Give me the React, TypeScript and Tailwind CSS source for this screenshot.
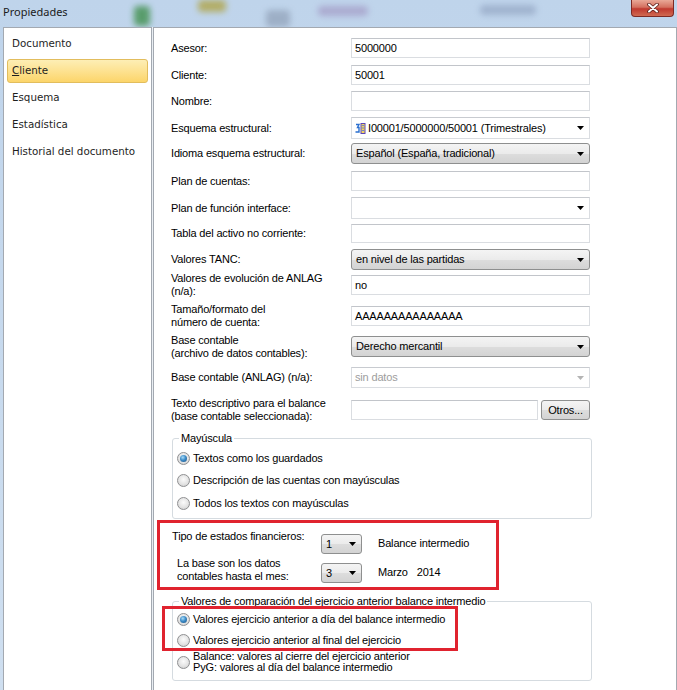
import React from "react";

function Arrow({ light = false }: { light?: boolean }) {
  return (
    <svg width="7" height="4" viewBox="0 0 7 4" className="shrink-0">
      <path d="M0 0h7L3.5 4z" fill={light ? "#b4b4b4" : "#000"} />
    </svg>
  );
}

function TextBox({ value = "", w = "w-[239px]", h = "h-[20px]" }: { value?: string; w?: string; h?: string }) {
  return (
    <div className={`${w} ${h} flex items-center border border-[#dadde1] border-t-[#c2c5ca] bg-white pl-[3px] text-black`}>
      {value}
    </div>
  );
}

function WhiteCombo({ children, h = "h-[22px]", disabled = false }: { children?: React.ReactNode; h?: string; disabled?: boolean }) {
  return (
    <div
      className={`w-[239px] ${h} flex items-center justify-between border border-[#dadde1] border-t-[#c8cbd0] bg-white pl-[3px] pr-[5px] ${
        disabled ? "text-[#9d9d9d]" : "text-black"
      }`}
    >
      <div className="flex items-center gap-[2px]">{children}</div>
      <Arrow light={disabled} />
    </div>
  );
}

function GrayCombo({ value, w = "w-[239px]", h = "h-[21px]" }: { value: string; w?: string; h?: string }) {
  return (
    <div
      className={`${w} ${h} flex items-center justify-between rounded-[3px] border border-[#8e8f8f] bg-[linear-gradient(#f4f4f4,#ebebeb_50%,#dddddd_51%,#d3d3d3)] pl-[4px] pr-[5px] text-black`}
    >
      <span>{value}</span>
      <Arrow />
    </div>
  );
}

function Row({ label, mt, h, children }: { label: React.ReactNode; mt: string; h: string; children: React.ReactNode }) {
  return (
    <div className={`flex items-center ${mt} ${h}`}>
      <div className="w-[180px] leading-[13px] text-black">{label}</div>
      {children}
    </div>
  );
}

function Radio({ checked = false }: { checked?: boolean }) {
  return (
    <span className="flex h-[13px] w-[13px] shrink-0 items-center justify-center rounded-full border border-[#8f9092] bg-[radial-gradient(circle_at_50%_40%,#fbfbfb,#e4e4e4_55%,#c9c9c9)]">
      {checked && (
        <span className="h-[7px] w-[7px] rounded-full bg-[radial-gradient(circle_at_40%_35%,#a9dcf8,#3d8cc8_45%,#1a4f80)]" />
      )}
    </span>
  );
}

function SchemeIcon() {
  return (
    <svg width="11" height="13" viewBox="0 0 11 13" className="shrink-0">
      <path d="M1 2.5h3l-1.5 3h1.5v4.5h-3.5" fill="none" stroke="#2a6fd0" strokeWidth="1.4" />
      <rect x="6" y="1.5" width="4" height="10" fill="#f3d35c" stroke="#5b46b8" strokeWidth="1" />
      <path d="M7 3.5h2M7 6h2M7 8.5h2" stroke="#4c7be0" strokeWidth="0.8" />
    </svg>
  );
}

export default function App() {
  const sideItems = ["Documento", "Cliente", "Esquema", "Estadística", "Historial del documento"];

  return (
    <div className="relative flex h-[690px] w-[677px] flex-col overflow-hidden bg-[linear-gradient(#bfd4eb,#cfdff0)] font-['Liberation_Sans',Arial,sans-serif]">
      {/* Title bar (blurred Aero glass behind) */}
      <div className="relative h-[27px] shrink-0 overflow-hidden">
        <span className="absolute left-[134px] top-[6px] h-[20px] w-[16px] rounded-sm bg-[#3f8f4c] opacity-80 blur-[3px]" />
        <span className="absolute left-[198px] top-[0px] h-[12px] w-[28px] rounded-sm bg-[#b0a447] opacity-80 blur-[3px]" />
        <span className="absolute left-[266px] top-[10px] h-[17px] w-[24px] rounded-sm bg-[#95a6bd] opacity-80 blur-[3px]" />
        <span className="absolute left-[318px] top-[6px] h-[10px] w-[50px] rounded-sm bg-[#9d8fbe] opacity-60 blur-[3px]" />
        <span className="absolute left-[480px] top-[5px] h-[10px] w-[56px] rounded-sm bg-[#8b9dbc] opacity-60 blur-[3px]" />
        <div className="absolute left-[3px] top-[4px] font-['Noto_Sans',sans-serif] text-[11px] leading-[15px] text-[#1b1b1b]">
          Propiedades
        </div>
        <div className="absolute left-[631px] top-0 flex h-[17px] w-[43px] items-center justify-center rounded-b-[4px] border border-t-0 border-[#7d2a24] bg-[linear-gradient(#e9a897,#d4705f_45%,#c0392f_55%,#d06a52)]">
          <svg width="12" height="10" viewBox="0 0 12 10">
            <path d="M2 1.5l8 7M10 1.5l-8 7" stroke="#5a1f1a" strokeWidth="3.6" strokeLinecap="round" />
            <path d="M2 1.5l8 7M10 1.5l-8 7" stroke="#fff" strokeWidth="2" strokeLinecap="round" />
          </svg>
        </div>
      </div>

      {/* Body */}
      <div className="flex min-h-0 flex-1 pl-[3px]">
        {/* Sidebar */}
        <div className="w-[149px] shrink-0 border border-b-0 border-[#a3a9b1] bg-white px-[3px] pt-[4px] font-['DejaVu_Sans',sans-serif] text-[10.3px] text-[#1e1e1e]">
          {sideItems.map((item) =>
            item === "Cliente" ? (
              <div
                key={item}
                className="mb-[3px] flex h-[24px] items-center rounded-[3px] border border-[#e2bd5d] bg-[linear-gradient(#fdeeb5,#fde291_50%,#fcd56a)] pl-[4px]"
              >
                <span>
                  <span className="underline">C</span>liente
                </span>
              </div>
            ) : (
              <div key={item} className="mb-[3px] flex h-[24px] items-center border border-transparent pl-[4px]">
                {item}
              </div>
            )
          )}
        </div>

        <div className="w-[1px] shrink-0 bg-[#e9eef3]" />

        {/* Main panel */}
        <div className="flex-1 border border-b-0 border-[#a3a9b1] bg-white pl-[17px] text-[11px] tracking-[-0.17px]">
          <Row label="Asesor:" mt="mt-[10px]" h="h-[20px]">
            <TextBox value="5000000" />
          </Row>
          <Row label="Cliente:" mt="mt-[7px]" h="h-[20px]">
            <TextBox value="50001" />
          </Row>
          <Row label="Nombre:" mt="mt-[6px]" h="h-[20px]">
            <TextBox />
          </Row>
          <Row label="Esquema estructural:" mt="mt-[6px]" h="h-[22px]">
            <WhiteCombo>
              <SchemeIcon />
              <span>I00001/5000000/50001 (Trimestrales)</span>
            </WhiteCombo>
          </Row>
          <Row label="Idioma esquema estructural:" mt="mt-[4px]" h="h-[21px]">
            <GrayCombo value="Español (España, tradicional)" />
          </Row>
          <Row label="Plan de cuentas:" mt="mt-[7px]" h="h-[20px]">
            <TextBox />
          </Row>
          <Row label="Plan de función interface:" mt="mt-[6px]" h="h-[22px]">
            <WhiteCombo />
          </Row>
          <Row label="Tabla del activo no corriente:" mt="mt-[5px]" h="h-[19px]">
            <TextBox h="h-[19px]" />
          </Row>
          <Row label="Valores TANC:" mt="mt-[6px]" h="h-[21px]">
            <GrayCombo value="en nivel de las partidas" />
          </Row>
          <Row
            label={
              <>
                Valores de evolución de ANLAG
                <br />
                (n/a):
              </>
            }
            mt="mt-[5px]"
            h="h-[20px]"
          >
            <TextBox value="no" />
          </Row>
          <Row
            label={
              <>
                Tamaño/formato del
                <br />
                número de cuenta:
              </>
            }
            mt="mt-[11px]"
            h="h-[20px]"
          >
            <TextBox value="AAAAAAAAAAAAAAA" />
          </Row>
          <Row
            label={
              <>
                Base contable
                <br />
                (archivo de datos contables):
              </>
            }
            mt="mt-[10px]"
            h="h-[21px]"
          >
            <GrayCombo value="Derecho mercantil" />
          </Row>
          <Row label="Base contable (ANLAG) (n/a):" mt="mt-[10px]" h="h-[21px]">
            <WhiteCombo h="h-[21px]" disabled>
              <span>sin datos</span>
            </WhiteCombo>
          </Row>
          <Row
            label={
              <>
                Texto descriptivo para el balance
                <br />
                (base contable seleccionada):
              </>
            }
            mt="mt-[12px]"
            h="h-[20px]"
          >
            <div className="flex w-[239px] items-center justify-between">
              <TextBox w="w-[187px]" />
              <div className="flex h-[20px] w-[49px] items-center justify-center rounded-[3px] border border-[#8e8f8f] bg-[linear-gradient(#f4f4f4,#ebebeb_50%,#dddddd_51%,#d3d3d3)] text-black">
                Otros...
              </div>
            </div>
          </Row>

          {/* Mayúscula group */}
          <fieldset className="ml-[1px] mt-[11px] h-[88px] w-[420px] rounded-[3px] border border-[#d5dbe0] pl-[4px] text-black">
            <legend className="ml-[2px] px-[2px] leading-[14px]">Mayúscula</legend>
            <div className="mt-[2px] flex h-[22px] items-center gap-[3px]">
              <Radio checked />
              <span>Textos como los guardados</span>
            </div>
            <div className="flex h-[22px] items-center gap-[3px]">
              <Radio />
              <span>Descripción de las cuentas con mayúsculas</span>
            </div>
            <div className="mt-[1px] flex h-[22px] items-center gap-[3px]">
              <Radio />
              <span>Todos los textos con mayúsculas</span>
            </div>
          </fieldset>

          {/* Highlighted period settings */}
          <div className="-ml-[14px] mt-[1px] flex h-[70px] w-[342px] flex-col border-[3px] border-[#e0232f] pl-[12px] text-black">
            <div className="flex h-[31px] items-start">
              <div className="mt-[6px] w-[149px] leading-[14px]">Tipo de estados financieros:</div>
              <div className="mt-[11px]">
                <GrayCombo value="1" w="w-[41px]" h="h-[20px]" />
              </div>
              <div className="ml-[16px] mt-[13px] leading-[14px]">Balance intermedio</div>
            </div>
            <div className="flex h-[32px] items-start">
              <div className="mt-[3px] w-[149px] pl-[5px] leading-[13px]">
                La base son los datos
                <br />
                contables hasta el mes:
              </div>
              <div className="mt-[9px]">
                <GrayCombo value="3" w="w-[41px]" h="h-[20px]" />
              </div>
              <div className="ml-[16px] mt-[11px] flex gap-[9px] leading-[14px]">
                <span>Marzo</span>
                <span>2014</span>
              </div>
            </div>
          </div>

          {/* Comparison group */}
          <fieldset className="relative ml-[1px] mt-[4px] h-[87px] w-[420px] rounded-[3px] border border-[#d5dbe0] pl-[4px] text-black">
            <legend className="ml-[2px] px-[2px] leading-[14px]">
              Valores de comparación del ejercicio anterior balance intermedio
            </legend>
            <div className="mt-[1px] flex h-[20px] items-center gap-[3px]">
              <Radio checked />
              <span>Valores ejercicio anterior a día del balance intermedio</span>
            </div>
            <div className="mt-[1px] flex h-[20px] items-center gap-[3px]">
              <Radio />
              <span>Valores ejercicio anterior al final del ejercicio</span>
            </div>
            <div className="-mt-[1px] flex h-[26px] items-center gap-[3px]">
              <Radio />
              <span className="leading-[11px]">
                Balance: valores al cierre del ejercicio anterior
                <br />
                PyG: valores al día del balance intermedio
              </span>
            </div>
            <div className="absolute left-[-11px] top-[-2px] h-[45px] w-[296px] border-[3px] border-[#e0232f]" />
          </fieldset>
        </div>
      </div>
    </div>
  );
}
